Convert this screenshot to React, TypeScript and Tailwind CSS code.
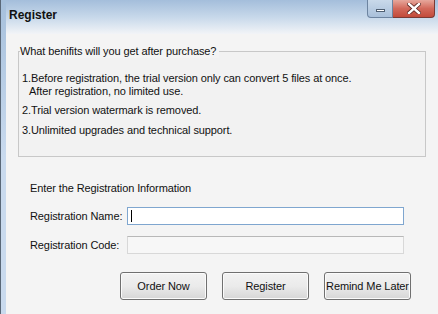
export default function App() {
  const font = { fontFamily: '"Liberation Sans", Arial, sans-serif' };
  return (
    <div
      className="relative w-[438px] h-[314px] overflow-hidden bg-[#f4f4f4] text-[11px] tracking-[-0.1px] text-[#111]"
      style={font}
    >
      {/* window frame + title */}
      <div className="flex h-full">
        <div className="w-[1px] shrink-0 bg-[#5a6878]" />
        <div className="w-[5px] shrink-0 bg-gradient-to-b from-[#a6c0dc] via-[#c9daee] to-[#c9daee]" />
        <div className="flex flex-1 flex-col">
          <div className="h-[34px] shrink-0 bg-gradient-to-b from-[#a4bedb] via-[#c7d8ea] to-[#f2f4f7] pl-[3px] pt-[6px]">
            <span className="text-[12px] font-bold tracking-normal text-[#111]">Register</span>
          </div>
          <div className="flex flex-1 flex-col pl-[12px] pr-[6px]">
            {/* group box */}
            <div className="relative mt-[17px] h-[106px] w-[408px] shrink-0 border border-[#c8c8c8] bg-[#f2f2f2] px-[3px] pt-[20px]">
              <span className="absolute -top-[8px] left-[1px] bg-[#f4f4f4] pr-[3px] leading-[14px]">
                What benifits will you get after purchase?
              </span>
              <div className="leading-[13px]">
                <p>1.Before registration, the trial version only can convert 5 files at once.</p>
                <p className="pl-[7px]">After registration, no limited use.</p>
                <p className="mt-[6px]">2.Trial version watermark is removed.</p>
                <p className="mt-[7px]">3.Unlimited upgrades and technical support.</p>
              </div>
            </div>

            <div className="mt-[24px] pl-[12px]">
              <p className="leading-[14px]">Enter the Registration Information</p>
              <div className="mt-[12px] flex items-center">
                <span className="w-[97px] whitespace-nowrap">Registration Name:</span>
                <div className="flex h-[18px] w-[277px] items-center border border-[#7fa6cf] bg-white pl-[3px]">
                  <div className="h-[12px] w-[1px] bg-black" />
                </div>
              </div>
              <div className="mt-[11px] flex items-center">
                <span className="w-[97px] whitespace-nowrap">Registration Code:</span>
                <div className="h-[18px] w-[277px] border border-[#d8d8d8] border-t-[#b8b8b8] bg-[#f7f7f7]" />
              </div>
            </div>

            <div className="mt-[18px] flex gap-[15px] pl-[102px]">
              {["Order Now", "Register", "Remind Me Later"].map((t) => (
                <button
                  key={t}
                  className="h-[28px] w-[87px] whitespace-nowrap rounded-[3px] border border-[#707070] bg-gradient-to-b from-[#f2f2f2] via-[#ebebeb] to-[#d6d6d6] text-[11px] text-[#111] shadow-[inset_0_0_0_1px_#fbfbfb]"
                >
                  {t}
                </button>
              ))}
            </div>
          </div>
        </div>
      </div>

      {/* caption buttons */}
      <div className="absolute right-[3px] top-0 flex">
        <div className="flex h-[18px] w-[26px] items-center justify-center rounded-bl-[4px] border border-t-0 border-[#6d84a0] bg-gradient-to-b from-[#c9d9ea] to-[#a9c0da]">
          <div className="mt-[3px] h-[3px] w-[9px] border border-[#4f5f72] bg-white" />
        </div>
        <div className="flex h-[18px] w-[42px] items-center justify-center rounded-br-[4px] border border-l-0 border-t-0 border-[#7a3a34] bg-gradient-to-b from-[#e6a79c] via-[#d2695b] to-[#c24a3a]">
          <svg width="14" height="11" viewBox="0 0 14 11">
            <path d="M2 1 L12 10 M12 1 L2 10" stroke="#5a2520" strokeWidth="4" strokeLinecap="square" />
            <path d="M2 1 L12 10 M12 1 L2 10" stroke="#ffffff" strokeWidth="2.4" strokeLinecap="square" />
          </svg>
        </div>
      </div>
    </div>
  );
}
